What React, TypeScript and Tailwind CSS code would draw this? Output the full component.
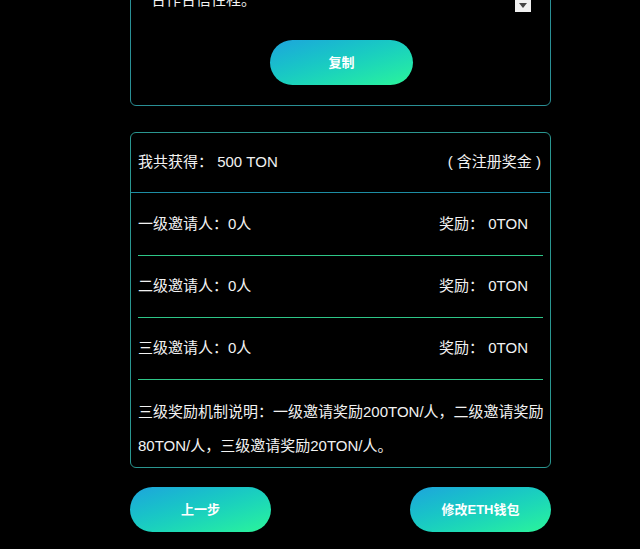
const font = { fontFamily: '"Liberation Sans", "Noto Sans CJK SC", sans-serif' };

const rows = [
  { label: '一级邀请人：0人', reward: '奖励： 0TON' },
  { label: '二级邀请人：0人', reward: '奖励： 0TON' },
  { label: '三级邀请人：0人', reward: '奖励： 0TON' },
];

function GradientButton({ children, className = '' }: { children: React.ReactNode; className?: string }) {
  return (
    <button
      className={`h-[45px] rounded-full bg-linear-to-br from-[#1fa4dc] to-[#2cf598] text-white text-[13px] font-bold ${className}`}
    >
      {children}
    </button>
  );
}

export default function App() {
  return (
    <div className="h-[549px] w-[640px] overflow-hidden bg-black text-[#f2f2f2]" style={font}>
      <div className="ml-[130px] w-[421px]">
        {/* invite link card, top part scrolled away */}
        <div className="-mt-[40px] rounded-md border border-[#2a8f95] pb-[20px]">
          <div className="relative h-[51px]">
            <p className="absolute left-[20px] top-[29px] text-[15px] leading-5">合作合信性程。</p>
            <div className="absolute left-[384px] top-[39px] flex h-[12px] w-[16px] items-start justify-center bg-[#f0f0f0]">
              <svg width="8" height="5" viewBox="0 0 8 5" className="mt-[3px]">
                <path d="M0 0h8L4 5z" fill="#444" />
              </svg>
            </div>
          </div>
          <div className="mt-[28px] flex justify-center pl-[2px]">
            <GradientButton className="w-[143px]">复制</GradientButton>
          </div>
        </div>

        {/* earnings card */}
        <div className="mt-[26px] rounded-md border border-[#2a9690] text-[15px]">
          <div className="flex h-[60px] items-center justify-between border-b border-[#1d8da3] pl-[7px] pr-[9px]">
            <span>我共获得： 500 TON</span>
            <span>( 含注册奖金 )</span>
          </div>
          <div className="px-[7px]">
            {rows.map((r, i) => (
              <div key={r.label}>
                <div
                  className={`flex items-center justify-between pr-[15px] ${i === 0 ? 'h-[62px]' : 'h-[61px]'}`}
                >
                  <span>{r.label}</span>
                  <span>{r.reward}</span>
                </div>
                <div className="h-px bg-[#2ec688]" />
              </div>
            ))}
            <p className="-mr-[5px] pb-[4px] pt-[15px] leading-[34px]">
              三级奖励机制说明：一级邀请奖励200TON/人，二级邀请奖励80TON/人，三级邀请奖励20TON/人。
            </p>
          </div>
        </div>

        <div className="mt-[19px] flex justify-between">
          <GradientButton className="w-[141px]">上一步</GradientButton>
          <GradientButton className="w-[141px]">修改ETH钱包</GradientButton>
        </div>
      </div>
    </div>
  );
}
